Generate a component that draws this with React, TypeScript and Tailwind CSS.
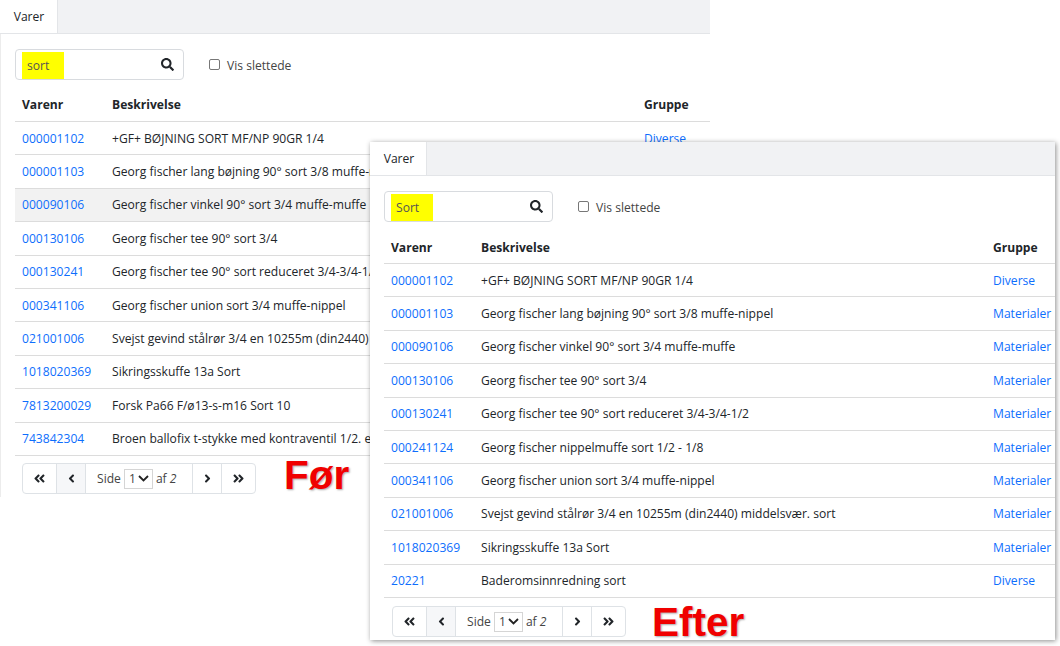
import React from "react";
import { FaSearch, FaAngleDoubleLeft, FaAngleLeft, FaAngleRight, FaAngleDoubleRight } from "react-icons/fa";

type Row = [string, string, string, boolean?];

const before: Row[] = [
  ["000001102", "+GF+ BØJNING SORT MF/NP 90GR 1/4", "Diverse"],
  ["000001103", "Georg fischer lang bøjning 90° sort 3/8 muffe-nippel", ""],
  ["000090106", "Georg fischer vinkel 90° sort 3/4 muffe-muffe", "", true],
  ["000130106", "Georg fischer tee 90° sort 3/4", ""],
  ["000130241", "Georg fischer tee 90° sort reduceret 3/4-3/4-1/2", ""],
  ["000341106", "Georg fischer union sort 3/4 muffe-nippel", ""],
  ["021001006", "Svejst gevind stålrør 3/4 en 10255m (din2440) middelsvær. sort", ""],
  ["1018020369", "Sikringsskuffe 13a Sort", ""],
  ["7813200029", "Forsk Pa66 F/ø13-s-m16 Sort 10", ""],
  ["743842304", "Broen ballofix t-stykke med kontraventil 1/2. en side", ""],
];

const after: Row[] = [
  ["000001102", "+GF+ BØJNING SORT MF/NP 90GR 1/4", "Diverse"],
  ["000001103", "Georg fischer lang bøjning 90° sort 3/8 muffe-nippel", "Materialer"],
  ["000090106", "Georg fischer vinkel 90° sort 3/4 muffe-muffe", "Materialer"],
  ["000130106", "Georg fischer tee 90° sort 3/4", "Materialer"],
  ["000130241", "Georg fischer tee 90° sort reduceret 3/4-3/4-1/2", "Materialer"],
  ["000241124", "Georg fischer nippelmuffe sort 1/2 - 1/8", "Materialer"],
  ["000341106", "Georg fischer union sort 3/4 muffe-nippel", "Materialer"],
  ["021001006", "Svejst gevind stålrør 3/4 en 10255m (din2440) middelsvær. sort", "Materialer"],
  ["1018020369", "Sikringsskuffe 13a Sort", "Materialer"],
  ["20221", "Baderomsinnredning sort", "Diverse"],
];

function Pager() {
  return (
    <div className="flex h-[31px] w-fit rounded border border-[#dee2e6] text-[#212529] bg-white">
      <div className="flex w-[34px] items-center justify-center border-r border-[#dee2e6]"><FaAngleDoubleLeft size={13} /></div>
      <div className="flex w-[29px] items-center justify-center border-r border-[#dee2e6] bg-[#f6f7f9]"><FaAngleLeft size={13} /></div>
      <div className="flex w-[107px] items-center border-r border-[#dee2e6] gap-[3px] pl-[11px] pt-[1px] text-[#444]">
        <span>Side</span>
        <span className="flex h-[20px] w-[29px] items-center gap-[1px] border border-[#d5d5d5] pl-[4px]">
          1
          <svg width="11" height="7" viewBox="0 0 11 7" className="ml-[1px]"><path d="M1 1l4.500 4.500L10 1" fill="none" stroke="#222" strokeWidth="1.800" /></svg>
        </span>
        <span>af <i>2</i></span>
      </div>
      <div className="flex w-[29px] items-center justify-center border-r border-[#dee2e6]"><FaAngleRight size={13} /></div>
      <div className="flex w-[33px] items-center justify-center"><FaAngleDoubleRight size={13} /></div>
    </div>
  );
}

function Panel({ rows, query, descWidth, descClip, indent, headPad, pagerGap, className, tabClass }: { rows: Row[]; query: string; descWidth: string; descClip: string; indent: string; headPad: string; pagerGap: string; className: string; tabClass: string }) {
  return (
    <div className={`absolute bg-white text-[12.1px] text-[#212529] ${className}`}>
      <div className="flex h-[34px] border-b border-[#e3e5e8] bg-[#f1f2f4]">
        <div className={`flex h-[33px] items-center justify-center border-r border-[#e3e5e8] bg-white pt-[1px] ${tabClass}`}>Varer</div>
      </div>
      <div className={`flex h-[31px] mt-[15px] items-center ${indent}`}>
        <div className="flex h-[31px] w-[169px] items-center justify-between rounded border border-[#d8dbdf] pr-[9px]">
          <span className="ml-[6px] flex h-[27px] mt-[2px] w-[42px] items-center bg-[#ffff00] pl-[5px] pt-[1px] text-[#555]">{query}</span>
          <FaSearch size={13} className="text-[#212529]" />
        </div>
        <div className="ml-[25px] flex items-center gap-[7px] pt-[1px] text-[#444]">
          <span className="h-[11px] w-[11px] rounded-[2px] border border-[#777]" />
          <span className="pt-[3px]">Vis slettede</span>
        </div>
      </div>
      <div className={`mt-[9px] overflow-hidden ${indent}`}>
        <div className={`flex h-[33px] items-center border-b border-[#dcdcdc] font-bold ${headPad}`}>
          <div className="w-[90px] shrink-0 pl-[7px]">Varenr</div>
          <div className={`shrink-0 pl-[7px] ${descWidth}`}>Beskrivelse</div>
          <div className="pl-[7px]">Gruppe</div>
        </div>
        {rows.map((r) => (
          <div key={r[0]} className={`flex h-[33.400px] items-center border-b border-[#dcdcdc] whitespace-nowrap pt-[1px] ${r[3] ? "bg-[#f2f2f2]" : ""}`}>
            <div className="w-[90px] shrink-0 pl-[7px] text-[#0d6efd]">{r[0]}</div>
            <div className={`shrink-0 pl-[7px] ${descWidth}`}><div className={`overflow-hidden ${descClip}`}>{r[1]}</div></div>
            <div className="pl-[7px] text-[#0d6efd]">{r[2]}</div>
          </div>
        ))}
      </div>
      <div className={`ml-[22px] ${pagerGap}`}>
        <Pager />
      </div>
    </div>
  );
}

export default function App() {
  return (
    <div className="relative h-[646px] w-[1060px] overflow-hidden bg-white [font-family:'Open_Sans','Noto_Sans',sans-serif]">
      <Panel rows={before} query="sort" descWidth="w-[532px]" descClip="w-[258px]" indent="ml-[15px]" headPad="" pagerGap="mt-[7px]" tabClass="w-[58px] pl-[1px]" className="left-0 top-0 h-[497px] w-[710px] shadow-[inset_1px_0_0_#ececec]" />
      <div className="absolute left-[284px] top-[450px] text-[40.500px] font-bold leading-[50px] text-[#f00000] [font-family:'Liberation_Sans',sans-serif] [text-shadow:1px_1px_2px_rgba(0,0,0,0.35)]">Før</div>
      <Panel rows={after} query="Sort" descWidth="w-[512px]" descClip="w-[500px]" indent="ml-[14px]" headPad="pt-[2px]" pagerGap="mt-[8px]" tabClass="w-[57px] pl-[2px]" className="left-[370px] top-[142px] h-[498px] w-[685px] shadow-[1px_1px_5px_rgba(0,0,0,0.45)]" />
      <div className="absolute left-[652px] top-[597px] text-[40.500px] font-bold leading-[50px] text-[#f00000] [font-family:'Liberation_Sans',sans-serif] [text-shadow:1px_1px_2px_rgba(0,0,0,0.35)]">Efter</div>
    </div>
  );
}
